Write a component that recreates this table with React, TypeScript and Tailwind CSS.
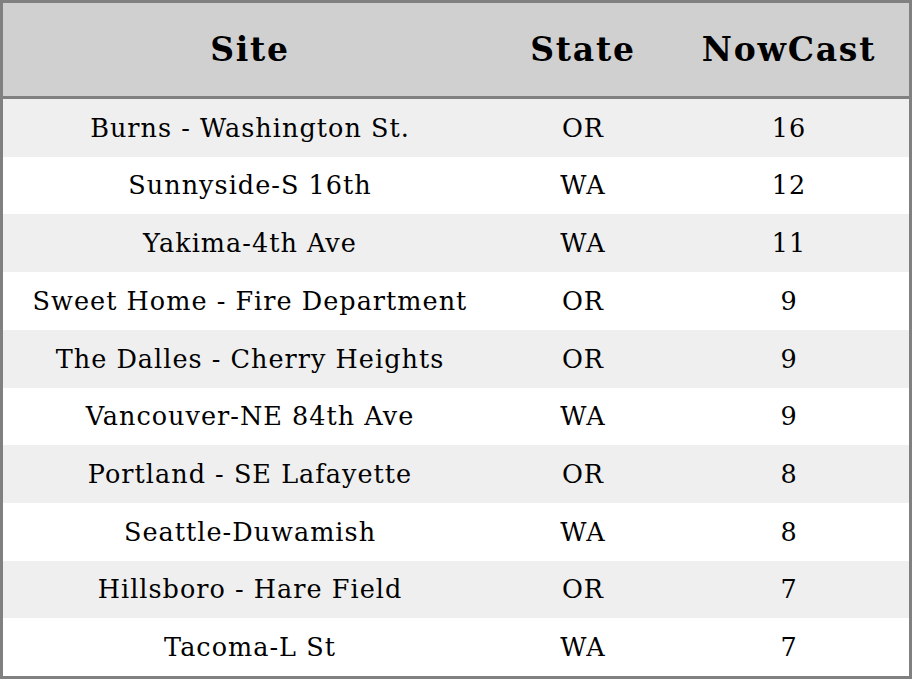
const rows = [
  { site: 'Burns - Washington St.', state: 'OR', nowcast: 16 },
  { site: 'Sunnyside-S 16th', state: 'WA', nowcast: 12 },
  { site: 'Yakima-4th Ave', state: 'WA', nowcast: 11 },
  { site: 'Sweet Home - Fire Department', state: 'OR', nowcast: 9 },
  { site: 'The Dalles - Cherry Heights', state: 'OR', nowcast: 9 },
  { site: 'Vancouver-NE 84th Ave', state: 'WA', nowcast: 9 },
  { site: 'Portland - SE Lafayette', state: 'OR', nowcast: 8 },
  { site: 'Seattle-Duwamish', state: 'WA', nowcast: 8 },
  { site: 'Hillsboro - Hare Field', state: 'OR', nowcast: 7 },
  { site: 'Tacoma-L St', state: 'WA', nowcast: 7 },
]

export default function App() {
  return (
    <div
      className="w-[912px] h-[679px] flex flex-col border-[3px] border-[#808080] bg-white text-black"
      style={{ fontFamily: '"DejaVu Serif", serif' }}
    >
      {/* Header */}
      <div className="h-[96px] shrink-0 grid grid-cols-[494px_172px_1fr] items-center bg-[#d0d0d0] border-b-[3px] border-[#808080] text-[33px] font-bold tracking-[0.054em]">
        <div className="text-center">Site</div>
        <div className="text-center">State</div>
        <div className="text-center">NowCast</div>
      </div>

      {/* Rows */}
      <div className="flex-1 flex flex-col">
        {rows.map((r, i) => (
          <div
            key={r.site}
            className={`flex-1 grid grid-cols-[494px_172px_1fr] items-center text-[25.5px] tracking-[0.04em] ${
              i % 2 === 0 ? 'bg-[#efefef]' : 'bg-white'
            }`}
          >
            <div className="text-center">{r.site}</div>
            <div className="text-center">{r.state}</div>
            <div className="text-center">{r.nowcast}</div>
          </div>
        ))}
      </div>
    </div>
  )
}
